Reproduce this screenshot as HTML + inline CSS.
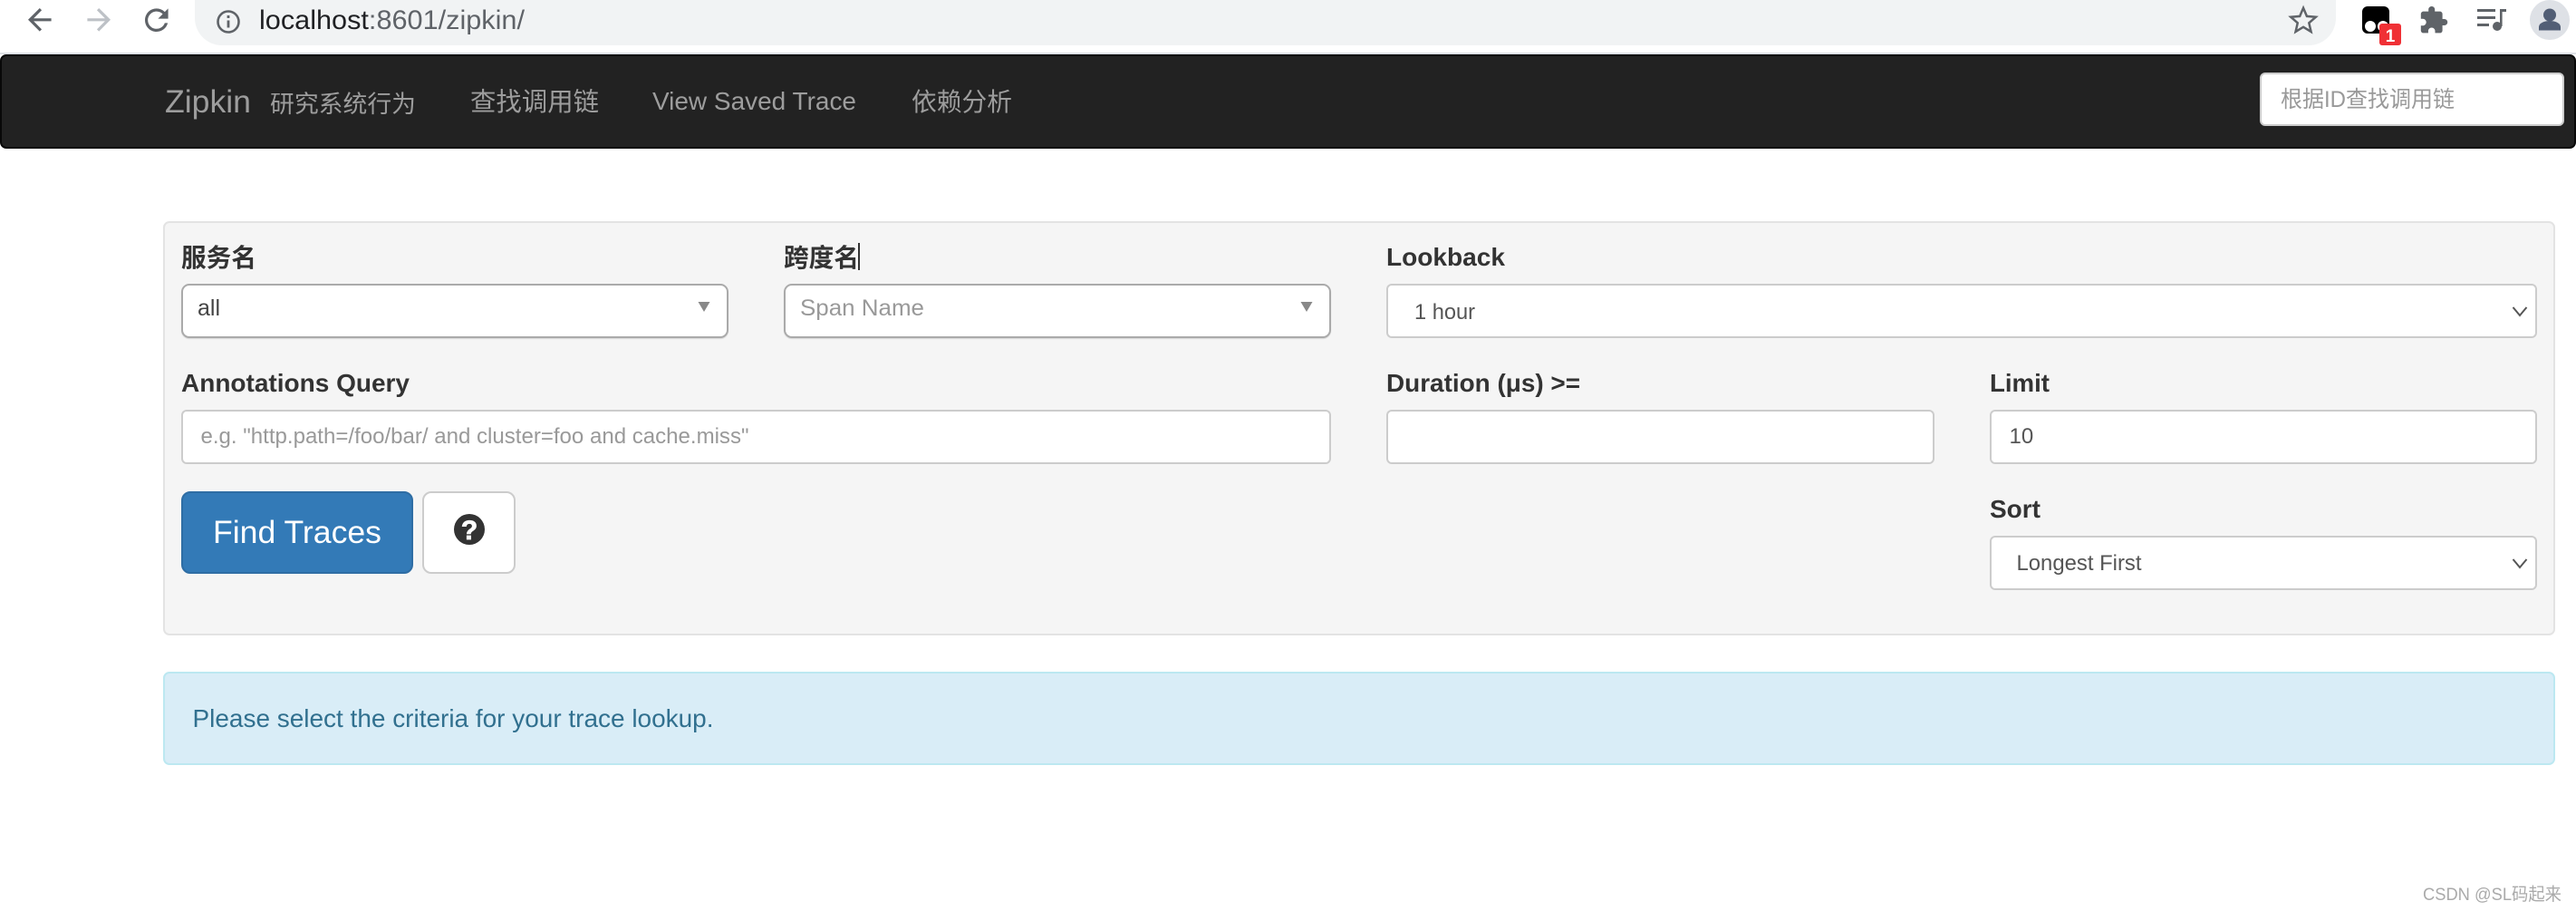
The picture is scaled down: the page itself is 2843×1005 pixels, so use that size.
<!DOCTYPE html>
<html lang="zh">
<head>
<meta charset="utf-8">
<title>Zipkin</title>
<style>
html,body{margin:0;padding:0;background:#fff;width:2843px;height:1005px;overflow:hidden}
body{position:relative;font-family:"Liberation Sans","Noto Sans CJK SC",sans-serif}
.b{position:absolute;box-sizing:border-box}
.nav{left:0;top:60px;width:2843px;height:104px;background:#222;border:2px solid #080808;border-radius:7px}
.line{left:0;top:58px;width:2843px;height:2px;background:#dee1e6}
.url{left:215px;top:-20px;width:2363px;height:70px;background:#f1f3f4;border-radius:0 0 30px 30px}
.navin{left:2494px;top:80px;width:336px;height:59px;background:#fff;border:2px solid #ccc;border-radius:6px}
.panel{left:180px;top:244px;width:2640px;height:457px;background:#f5f5f5;border:2px solid #e3e3e3;border-radius:7px}
.s2{top:313px;width:604px;height:60px;background:#fff;border:2px solid #aaa;border-radius:9px;box-shadow:0 1px 1px rgba(0,0,0,.12)}
.in{background:#fff;border:2px solid #ccc;border-radius:6px;height:60px}
.btn{left:200px;top:542px;width:256px;height:91px;background:#337ab7;border:2px solid #2e6da4;border-radius:10px}
.help{left:466px;top:542px;width:103px;height:91px;background:#fff;border:2px solid #ccc;border-radius:10px}
.alert{left:180px;top:741px;width:2640px;height:103px;background:#d9edf7;border:2px solid #bce8f1;border-radius:7px}
.caret{left:947px;top:268px;width:2px;height:30px;background:#333}
svg.o{position:absolute;left:0;top:0;width:2843px;height:1005px}
text{font-family:"Liberation Sans","Noto Sans CJK SC",sans-serif}
.lab{font-size:28px;font-weight:bold;fill:#333}
</style>
</head>
<body>
<div class="b line"></div>
<div class="b url"></div>
<div class="b nav"></div>
<div class="b navin"></div>
<div class="b panel"></div>
<div class="b s2" style="left:200px"></div>
<div class="b s2" style="left:865px"></div>
<div class="b in" style="left:1530px;top:313px;width:1270px"></div>
<div class="b in" style="left:200px;top:452px;width:1269px"></div>
<div class="b in" style="left:1530px;top:452px;width:605px"></div>
<div class="b in" style="left:2196px;top:452px;width:604px"></div>
<div class="b in" style="left:2196px;top:591px;width:604px"></div>
<div class="b btn"></div>
<div class="b help"></div>
<div class="b alert"></div>
<div class="b caret"></div>

<svg class="o" viewBox="0 0 2843 1005" xmlns="http://www.w3.org/2000/svg">
  <!-- browser toolbar icons -->
  <g transform="translate(24.6 2.6) scale(1.6)" fill="#5f6368"><path d="M20 11H7.83l5.59-5.59L12 4l-8 8 8 8 1.41-1.41L7.83 13H20v-2z"/></g>
  <g transform="translate(128.4 2.6) scale(-1.6 1.6)" fill="#bdc1c6"><path d="M20 11H7.83l5.59-5.59L12 4l-8 8 8 8 1.41-1.41L7.83 13H20v-2z"/></g>
  <g transform="translate(153.6 3) scale(1.6)" fill="#5f6368"><path d="M17.65 6.35A7.958 7.958 0 0 0 12 4c-4.42 0-7.99 3.58-7.99 8s3.57 8 7.99 8c3.73 0 6.84-2.55 7.73-6h-2.08A5.99 5.99 0 0 1 12 18c-3.31 0-6-2.69-6-6s2.69-6 6-6c1.66 0 3.14.69 4.22 1.78L13 11h7V4l-2.35 2.35z"/></g>
  <circle cx="252" cy="24" r="11.5" fill="none" stroke="#5f6368" stroke-width="2.6"/>
  <rect x="250.6" y="22.5" width="2.8" height="8" fill="#5f6368"/>
  <rect x="250.6" y="17" width="2.8" height="3" fill="#5f6368"/>
  <text x="286" y="32" font-size="29.5" textLength="293" lengthAdjust="spacingAndGlyphs"><tspan fill="#202124">localhost</tspan><tspan fill="#5f6368">:8601/zipkin/</tspan></text>
  <g transform="translate(2525.5 6) scale(1.38)"><path d="M12 17.27L18.18 21l-1.64-7.03L22 9.24l-7.19-.61L12 2 9.19 8.63 2 9.24l5.46 4.73L5.82 21z" fill="none" stroke="#5f6368" stroke-width="1.8" stroke-linejoin="miter"/></g>
  <rect x="2607" y="7" width="30" height="30" rx="6" fill="#000"/>
  <circle cx="2616" cy="29" r="6" fill="#fff"/>
  <circle cx="2630" cy="29" r="6" fill="#fff"/>
  <rect x="2626" y="26" width="24" height="24" rx="3" fill="#f03035"/>
  <text x="2638" y="46" font-size="19" font-weight="bold" fill="#fff" text-anchor="middle">1</text>
  <g transform="translate(2669 5.6) scale(1.4)" fill="#5f6368"><path d="M20.5 11H19V7c0-1.1-.9-2-2-2h-4V3.5C13 2.12 11.88 1 10.5 1S8 2.12 8 3.5V5H4c-1.1 0-1.99.9-1.99 2v3.8H3.5c1.49 0 2.7 1.21 2.7 2.7s-1.21 2.7-2.7 2.7H2V20c0 1.1.9 2 2 2h3.8v-1.5c0-1.49 1.21-2.7 2.7-2.7 1.49 0 2.7 1.21 2.7 2.7V22H17c1.1 0 2-.9 2-2v-4h1.5c1.38 0 2.5-1.12 2.5-2.5S21.88 11 20.5 11z"/></g>
  <g fill="#5f6368">
    <rect x="2734" y="10" width="20" height="3"/>
    <rect x="2734" y="18" width="20" height="3"/>
    <rect x="2734" y="26" width="13" height="3"/>
    <circle cx="2756" cy="29" r="5"/>
    <rect x="2759" y="10" width="2.6" height="19"/>
    <rect x="2759" y="10" width="7" height="3"/>
  </g>
  <circle cx="2814" cy="22" r="22" fill="#dee1e6"/>
  <circle cx="2814" cy="16.5" r="7" fill="#525e75"/>
  <path d="M2802 33.5v-3.5c0-5 7-7 12-7s12 2 12 7v3.5z" fill="#525e75"/>

  <!-- nav text -->
  <text x="182" y="124" font-size="35" fill="#9d9d9d" textLength="95" lengthAdjust="spacingAndGlyphs">Zipkin</text>
  <text x="298" y="124" font-size="26.7" fill="#9d9d9d" textLength="161" lengthAdjust="spacingAndGlyphs">研究系统行为</text>
  <text x="519" y="122" font-size="28.4" fill="#9d9d9d" textLength="142" lengthAdjust="spacingAndGlyphs">查找调用链</text>
  <text x="720" y="121" font-size="28" fill="#9d9d9d" textLength="225" lengthAdjust="spacingAndGlyphs">View Saved Trace</text>
  <text x="1006" y="122" font-size="28" fill="#9d9d9d" textLength="111" lengthAdjust="spacingAndGlyphs">依赖分析</text>
  <text x="2517" y="118" font-size="25" fill="#999" textLength="192" lengthAdjust="spacingAndGlyphs">根据ID查找调用链</text>

  <!-- labels -->
  <text class="lab" x="200" y="294" textLength="83" lengthAdjust="spacingAndGlyphs">服务名</text>
  <text class="lab" x="865" y="294" textLength="83" lengthAdjust="spacingAndGlyphs">跨度名</text>
  <text class="lab" x="1530" y="293" textLength="131" lengthAdjust="spacingAndGlyphs">Lookback</text>
  <text class="lab" x="200" y="432" textLength="252" lengthAdjust="spacingAndGlyphs">Annotations Query</text>
  <text class="lab" x="1530" y="432" textLength="214" lengthAdjust="spacingAndGlyphs">Duration (μs) &gt;=</text>
  <text class="lab" x="2196" y="432" textLength="66" lengthAdjust="spacingAndGlyphs">Limit</text>
  <text class="lab" x="2196" y="571" textLength="56" lengthAdjust="spacingAndGlyphs">Sort</text>

  <!-- field values -->
  <text x="218" y="348" font-size="25" fill="#444">all</text>
  <text x="883" y="348" font-size="25" fill="#999" textLength="137" lengthAdjust="spacingAndGlyphs">Span Name</text>
  <path d="M770.5 333h13l-6.500 11z" fill="#888"/>
  <path d="M1435.500 333h13l-6.500 11z" fill="#888"/>
  <text x="1561" y="352" font-size="24" fill="#555" textLength="67" lengthAdjust="spacingAndGlyphs">1 hour</text>
  <path d="M2773.500 339l7.500 9 7.500-9" fill="none" stroke="#555" stroke-width="2"/>
  <text x="221.500" y="489" font-size="24" fill="#999" textLength="605" lengthAdjust="spacingAndGlyphs">e.g. "http.path=/foo/bar/ and cluster=foo and cache.miss"</text>
  <text x="2217.500" y="489" font-size="24" fill="#555">10</text>
  <text x="2225.500" y="629" font-size="24" fill="#555" textLength="138" lengthAdjust="spacingAndGlyphs">Longest First</text>
  <path d="M2773.500 617l7.500 9 7.500-9" fill="none" stroke="#555" stroke-width="2"/>

  <!-- buttons -->
  <text x="235" y="599" font-size="35" fill="#fff" textLength="186" lengthAdjust="spacingAndGlyphs">Find Traces</text>
  <circle cx="518" cy="584" r="17" fill="#333"/>
  <text x="518" y="595" font-size="30" font-weight="bold" fill="#fff" stroke="#fff" stroke-width="0.8" text-anchor="middle">?</text>

  <!-- alert -->
  <text x="212.500" y="802" font-size="28" fill="#31708f" textLength="575" lengthAdjust="spacingAndGlyphs">Please select the criteria for your trace lookup.</text>

  <!-- watermark -->
  <text x="2674" y="993" font-size="19.500" fill="#aaa" textLength="153" lengthAdjust="spacingAndGlyphs">CSDN @SL码起来</text>
</svg>
</body>
</html>
